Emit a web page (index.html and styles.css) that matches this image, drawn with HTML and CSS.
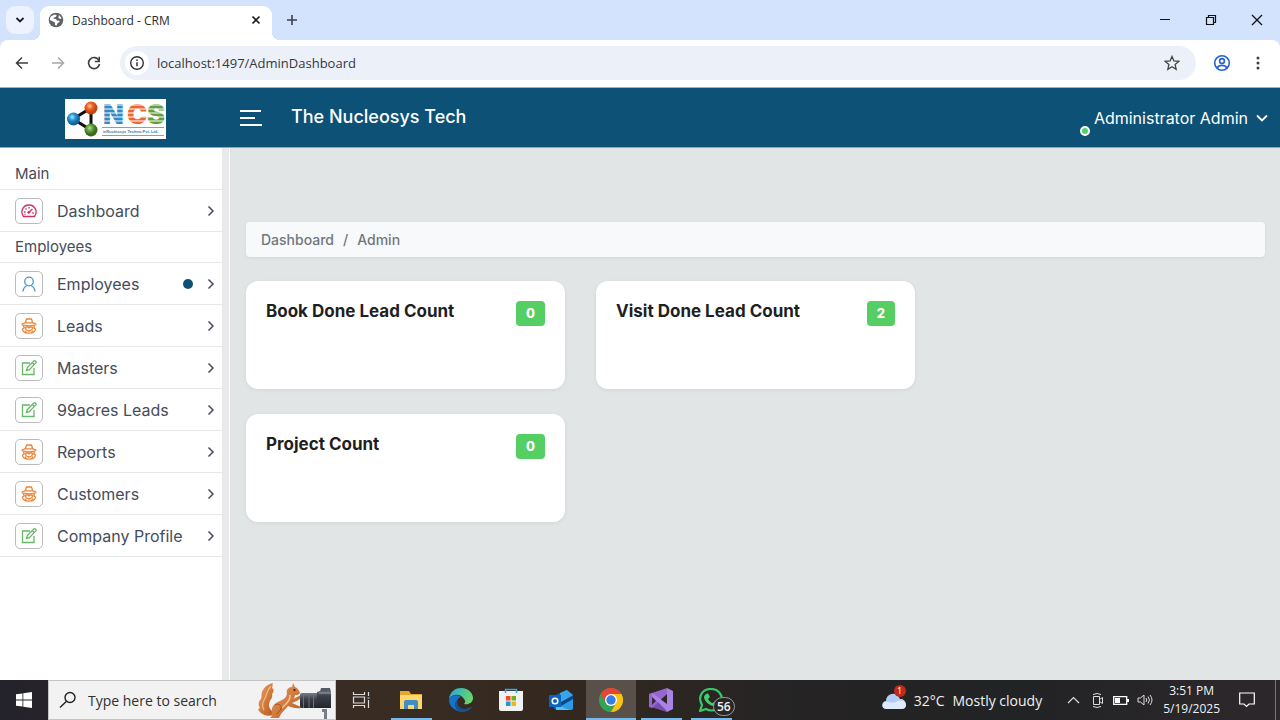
FILE: index.html
```html
<!DOCTYPE html>
<html lang="en">
<head>
<meta charset="utf-8">
<title>Dashboard - CRM</title>
<link rel="stylesheet" href="styles.css">
</head>
<body>
<svg class="defs" aria-hidden="true">
  <symbol id="chev" viewBox="0 0 8 12"><path d="M1.500 1.500 6 6l-4.500 4.500" fill="none" stroke="currentColor" stroke-width="1.500"/></symbol>
  <symbol id="edit" viewBox="0 0 16 16"><g fill="none" stroke="#66b866" stroke-width="1.300"><path d="M9 3H1.500v11.500H13V8"/><path d="M5.500 10.500 6.300 7.600 12.900 1c1-.9 2.900.8 2 1.900L8.300 9.600z"/><path d="M11.400 2.600l2 2"/></g></symbol>
  <symbol id="spy" viewBox="0 0 16 16"><g fill="none" stroke="#ee8434" stroke-width="1.300" stroke-linejoin="round"><path d="M4.300 5 5.500 1h5l1.200 4"/><path d="M4 4.800h8l3 1.200c0 1.200-3 1.800-7 1.800S1 7.200 1 6z"/><path d="M2.700 7.500c-.5 1 .2 1.800.8 2.200L1.500 11c.2 3 2 4.200 6.500 4.200s6.300-1.200 6.500-4.200l-2-1.300c.6-.4 1.300-1.200.8-2.200"/><path d="M4.500 9h2.700L8 10l.8-1h2.700M4.500 9.300c0 2 1.500 3.700 3.500 3.700s3.500-1.700 3.500-3.700M4 12.500l1.500 2.500M12 12.500 10.500 15"/></g></symbol>
</svg>

<div class="tabs">
  <button class="tab-search" aria-label="Search tabs"><svg width="10" height="8" viewBox="0 0 10 8"><path d="M1.500 2 5 5.500 8.500 2" fill="none" stroke="#1b1d22" stroke-width="1.800"/></svg></button>
  <div class="tab">
    <svg width="16" height="16" viewBox="0 0 16 16"><circle cx="8" cy="8" r="7.300" fill="#5f6368"/><path d="M3 4.200 6.800 2.500l2 .8-1.300 2H6.200l-.7 1.500 2.500.2 1 1.800 2-.2.700 1.200-2.200 1.400-.8 2.300-1.800-.4.200-2.300-2-1.400L1.800 8c0-1.500.4-2.800 1.200-3.800z" fill="#fff"/><path d="M11 3l2.600 3-1.300.9-1.900-1z" fill="#fff"/></svg>
    <span class="tab-title">Dashboard - CRM</span>
    <button class="icon" aria-label="Close tab"><svg width="10" height="10" viewBox="0 0 10 10"><path d="M1.500 1.500l7 7m0-7-7 7" stroke="#1b1d22" stroke-width="1.600"/></svg></button>
  </div>
  <button class="icon new-tab" aria-label="New tab"><svg width="12" height="12" viewBox="0 0 12 12"><path d="M6 1v10M1 6h10" stroke="#3c4043" stroke-width="1.600"/></svg></button>
  <div class="window-controls">
    <button class="icon" aria-label="Minimize"><svg width="12" height="12" viewBox="0 0 12 12"><path d="M1 5.500h10" stroke="#111"/></svg></button>
    <button class="icon" aria-label="Restore"><svg width="12" height="12" viewBox="0 0 12 12" fill="none" stroke="#111" stroke-width="1.200"><path d="M1.500 3.500h7v7h-7zM3.500 3.500v-2h7v7h-2"/></svg></button>
    <button class="icon" aria-label="Close"><svg width="12" height="12" viewBox="0 0 12 12"><path d="M1 1l10 10M11 1 1 11" stroke="#111" stroke-width="1.300"/></svg></button>
  </div>
</div>

<div class="toolbar-wrap">
<div class="toolbar">
  <button class="icon nav" aria-label="Back"><svg width="14" height="14" viewBox="0 0 14 14"><path d="M13 7H2M7 1.500 1.500 7 7 12.500" fill="none" stroke="#3c4043" stroke-width="1.500"/></svg></button>
  <button class="icon nav" aria-label="Forward"><svg width="14" height="14" viewBox="0 0 14 14"><path d="M1 7h11M7 1.500 12.500 7 7 12.500" fill="none" stroke="#a4a7ab" stroke-width="1.500"/></svg></button>
  <button class="icon nav" aria-label="Reload"><svg width="14" height="14" viewBox="0 0 14 14"><path d="M12 4.600A5.500 5.500 0 1 0 12.500 8" fill="none" stroke="#3c4043" stroke-width="1.600"/><path d="M13 .8v5.400H7.800V4.700h3.700V.8z" fill="#3c4043"/></svg></button>
  <div class="address">
    <button class="icon site-info" aria-label="Site information"><svg width="16" height="16" viewBox="0 0 16 16"><circle cx="8" cy="8" r="6.300" fill="none" stroke="#2f3236" stroke-width="1.400"/><path d="M8 7.300v4M8 4.500v1.600" stroke="#2f3236" stroke-width="1.500"/></svg></button>
    <input class="url" type="text" aria-label="Address" value="localhost:1497/AdminDashboard">
    <button class="icon" aria-label="Bookmark"><svg width="16" height="16" viewBox="0 0 16 16"><path d="M8 1.500 9.900 6l4.900.4-3.700 3.200 1.100 4.700L8 11.800l-4.200 2.500 1.100-4.700L1.200 6.400 6.100 6z" fill="none" stroke="#444" stroke-width="1.300"/></svg></button>
  </div>
  <button class="icon profile" aria-label="Profile"><svg width="18" height="18" viewBox="0 0 18 18" fill="none" stroke="#2563d0" stroke-width="1.600"><circle cx="9" cy="9" r="7.300"/><circle cx="9" cy="7" r="2.400"/><path d="M4 14c2-3.500 8-3.500 10 0"/></svg></button>
  <button class="icon more" aria-label="Menu"><svg width="4" height="14" viewBox="0 0 4 14" fill="#3c4043"><circle cx="2" cy="2" r="1.500"/><circle cx="2" cy="7" r="1.500"/><circle cx="2" cy="12" r="1.500"/></svg></button>
</div>
</div>

<header class="app-header">
  <div class="brand">
    <svg width="101" height="40" viewBox="0 0 101 40">
      <defs>
        <radialGradient id="gb" cx=".4" cy=".35"><stop offset="0" stop-color="#b5e4fa"/><stop offset=".5" stop-color="#2697d5"/><stop offset="1" stop-color="#12649f"/></radialGradient>
        <radialGradient id="go" cx=".4" cy=".35"><stop offset="0" stop-color="#ffc49c"/><stop offset=".5" stop-color="#ee6224"/><stop offset="1" stop-color="#c2440e"/></radialGradient>
        <radialGradient id="gg" cx=".4" cy=".35"><stop offset="0" stop-color="#c0dc97"/><stop offset=".5" stop-color="#609b37"/><stop offset="1" stop-color="#366a1d"/></radialGradient>
      </defs>
      <path d="M0 0h101v40H0z" fill="#fff"/>
      <path d="M8 20 26 9v22z" fill="none" stroke="#111" stroke-width="3"/>
      <circle cx="8.500" cy="20" r="6.500" fill="url(#gb)"/><circle cx="26" cy="9" r="6.500" fill="url(#go)"/><circle cx="26" cy="31" r="6.500" fill="url(#gg)"/>
      <g class="logo-letters"><text x="38" y="25" fill="#3189c5">N</text><text x="62" y="25" fill="#ee6535">C</text><text x="82" y="25" fill="#639d40">S</text></g>
      <path d="M37 6h62M37 10h62M37 14h62M37 18h62M37 22h62" stroke="#fff" stroke-width="1.200"/>
      <path d="M37 28.500h62M37 36.500h62" stroke="#4694bd" stroke-width=".8"/>
      <text class="logo-sub" x="38" y="34">ieNucleosys Techno Pvt. Ltd.</text>
    </svg>
  </div>
  <button class="icon burger" aria-label="Toggle menu"><svg width="22" height="16" viewBox="0 0 22 16"><path d="M0 1h21M0 8h15M0 15h22" stroke="#fff" stroke-width="2"/></svg></button>
  <h1>The Nucleosys Tech</h1>
  <button class="user"><span class="online"></span>Administrator Admin<svg width="12" height="8" viewBox="0 0 12 8"><path d="M1 1.500l5 5 5-5" fill="none" stroke="#fff" stroke-width="1.800"/></svg></button>
</header>

<div class="app">
  <nav class="sidebar">
    <h2 class="group">Main</h2>
    <a class="item" href="#"><span class="tile"><svg viewBox="0 0 16 16"><g fill="none" stroke="#d02f65" stroke-width="1.300"><path d="M2.500 13.500C-1.200 8.500 2 2 8 2s9.200 6.500 5.500 11.500z"/><path d="M8 4v1.500M4.500 5.500l1 1M3 9h1.500M12.800 10h-1.500M11.500 6 7.500 9.500M3.500 11.500l1-.5"/></g><circle cx="7.800" cy="9.300" r="1.400" fill="#d02f65"/></svg></span>Dashboard<svg class="chev"><use href="#chev"/></svg></a>
    <h2 class="group">Employees</h2>
    <a class="item" href="#"><span class="tile"><svg viewBox="0 0 16 16" fill="none" stroke="#4b99c9" stroke-width="1.300"><circle cx="8" cy="5.500" r="4.300"/><path d="M2 15.500c.2-3.500 2-5 4-6M14 15.500c-.2-3.500-2-5-4-6"/></svg></span>Employees<span class="dot"></span><svg class="chev"><use href="#chev"/></svg></a>
    <a class="item" href="#"><span class="tile"><svg><use href="#spy"/></svg></span>Leads<svg class="chev"><use href="#chev"/></svg></a>
    <a class="item" href="#"><span class="tile"><svg><use href="#edit"/></svg></span>Masters<svg class="chev"><use href="#chev"/></svg></a>
    <a class="item" href="#"><span class="tile"><svg><use href="#edit"/></svg></span>99acres Leads<svg class="chev"><use href="#chev"/></svg></a>
    <a class="item" href="#"><span class="tile"><svg><use href="#spy"/></svg></span>Reports<svg class="chev"><use href="#chev"/></svg></a>
    <a class="item" href="#"><span class="tile"><svg><use href="#spy"/></svg></span>Customers<svg class="chev"><use href="#chev"/></svg></a>
    <a class="item" href="#"><span class="tile"><svg><use href="#edit"/></svg></span>Company Profile<svg class="chev"><use href="#chev"/></svg></a>
  </nav>
  <main class="content">
    <nav class="crumbs" aria-label="Breadcrumb"><a href="#">Dashboard</a><span class="slash">/</span><span>Admin</span></nav>
    <div class="cards">
      <section class="card"><h2>Book Done Lead Count</h2><span class="badge">0</span></section>
      <section class="card"><h2>Visit Done Lead Count</h2><span class="badge">2</span></section>
      <section class="card new-row"><h2>Project Count</h2><span class="badge">0</span></section>
    </div>
  </main>
</div>

<footer class="taskbar">
  <button class="icon start" aria-label="Start"><svg width="16" height="16" viewBox="0 0 16 16" fill="#fff"><path d="M0 2.300 6.500 1.400v6.200H0zM7.300 1.300 16 0v7.600H7.300zM0 8.400h6.500v6.200L0 13.700zM7.300 8.400H16V16l-8.700-1.300z"/></svg></button>
  <div class="search">
    <svg width="18" height="18" viewBox="0 0 18 18"><circle cx="11" cy="6.500" r="5" fill="none" stroke="#222" stroke-width="1.400"/><path d="M7.500 10.200 1 16.500" stroke="#222" stroke-width="1.400"/></svg>
    <input type="text" aria-label="Search" placeholder="Type here to search">
    <svg class="art" width="76" height="38" viewBox="0 0 76 38">
      <defs><linearGradient id="fur" x2="1" y2="1"><stop stop-color="#eba062"/><stop offset="1" stop-color="#b95a20"/></linearGradient><linearGradient id="lens" x2="0" y2="1"><stop stop-color="#7a808a"/><stop offset=".4" stop-color="#3b4049"/><stop offset="1" stop-color="#23262c"/></linearGradient></defs>
      <path d="M16 34C9 36 3 33 1 28c2 0 2-1 1-3-1-3 0-5 2-7 1-2 0-4 1-7 2-5 6-8 11-9-1 2 0 3-1 5 2 1 2 4 0 6 1 3-1 5-2 7-2 4-1 8 3 11z" fill="url(#fur)"/>
      <path d="M7 29c-3-4-1-8 1-12 2-3 1-7 6-12" fill="none" stroke="#f3b984" stroke-width="1.300"/>
      <path d="M15 31c-1-6 3-9 8-11 4-2 6-3 7-7-1-4 1-7 5-7l1-4 2 4c3 1 4 4 5 6-1 2-3 2-5 2 0 2-1 3-2 4l8-4 1 2c-3 3-7 5-10 6l9 4v1c-5 1-10-1-13-2-2 3-5 5-7 8l-2 4h-9l2-2c-1-1 0-2 0-4z" fill="url(#fur)"/>
      <path d="M33 14c1 5-4 9-8 13" fill="none" stroke="#f4c493" stroke-width="1.500"/>
      <path d="M18 24c3-2 7 0 6 4-1 2-3 4-5 5" fill="none" stroke="#a9501b"/>
      <circle cx="37.500" cy="9" r="1" fill="#251510"/>
      <path d="M43 14q0-2 2-2h16v15H45q-2 0-2-2z" fill="url(#lens)"/><path d="M46.500 12v15M52 12v15M56.500 12v15" stroke="#6b717c"/>
      <path d="M60 11l3-1 1-3h9l1 4v16H60z" fill="url(#lens)"/><path d="M64 7h9v3h-9z" fill="#565c67"/><path d="M62 12h12" stroke="#989faa"/><path d="M65 28h5v10h-3V31h-2z" fill="#787e86"/>
    </svg>
  </div>
  <div class="apps">
    <button class="icon" aria-label="Task view"><svg width="18" height="16" viewBox="0 0 18 16" fill="none" stroke="#ddd" stroke-width="1.200"><path d="M1.500 0v2.500h11V0M1.500 5h11v6h-11zM1.500 16v-2.500h11V16M16.500 0v4M16.500 8v8M15.500 6h2"/></svg></button>
    <button class="icon running" aria-label="File Explorer"><svg width="22" height="20" viewBox="0 0 22 20"><path d="M0 1h9l2 3h11v15H0z" fill="#e5a629"/><path d="M0 5h22v14H0z" fill="#fdd76b"/><path d="M4 19v-7q0-2 2-2h10q2 0 2 2v7h-4v-4H8v4z" fill="#3f8dc5"/></svg></button>
    <button class="icon" aria-label="Edge"><svg width="24" height="24" viewBox="0 0 24 24"><defs><linearGradient id="e" x2="1" y2=".3"><stop stop-color="#27a6dd"/><stop offset="1" stop-color="#65d56b"/></linearGradient></defs><path d="M0 11C1 3 7 0 12 0c8 0 12 6 12 10 0 5-5 7-9 6 2-2 1-4 0-5C12 6 4 5 0 11z" fill="url(#e)"/><path d="M0 12C1 7 9 6 12 9c-5 1-5 8-1 11 3 2 8 1 12-1-6 7-14 5-18 2-4-3-5-6-5-9z" fill="#1574c7"/><path d="M9 11c-3 4 0 10 7 10 3 0 5-1 7-2-2 3-6 5-10 5-8-1-9-10-4-13z" fill="#174f91"/></svg></button>
    <button class="icon" aria-label="Store"><svg width="24" height="24" viewBox="0 0 24 24"><path d="M6.500 5V1.500h11V5" fill="none" stroke="#32a8df" stroke-width="1.500"/><path d="M0 3h24v18q0 2-2 2H2q-2 0-2-2z" fill="#f1f1f1"/><path d="M6.500 5V3M17.500 5V3" stroke="#32a8df" stroke-width="1.500"/><path d="M7 8h4.500v4.500H7z" fill="#ed4b26"/><path d="M12.500 8H17v4.500h-4.500z" fill="#74ad21"/><path d="M7 13.500h4.500V18H7z" fill="#159bd7"/><path d="M12.500 13.500H17V18h-4.500z" fill="#f5b51a"/></svg></button>
    <button class="icon" aria-label="Outlook"><svg width="24" height="22" viewBox="0 0 24 22"><path d="M5 7 17 1l7 5v14H5z" fill="#1164b4"/><path d="m11 4 7-3 6 5-13 8z" fill="#38a5e7"/><path d="M12 13 24 7v4l-11 6z" fill="#0b4487"/><path d="m7 20 17-10v9q0 2-2 2H7z" fill="#2e9be4"/><path d="m7 16 14 5H7z" fill="#56c3f3"/><path d="M0 6h12v12H0z" fill="#0b65b9"/><circle cx="6" cy="12" r="2.800" fill="none" stroke="#fff" stroke-width="1.500"/></svg></button>
    <button class="icon running active" aria-label="Chrome"><svg width="24" height="24" viewBox="0 0 24 24"><circle cx="12" cy="12" r="12" fill="#31a553"/><path d="M1.600 6A12 12 0 0 1 22.400 6L12 12z" fill="#e94335"/><path d="M1.600 6 7 15l5-9z" fill="#e94335"/><path d="M22.400 6H12l5 9-5 9A12 12 0 0 0 22.400 6z" fill="#fbc116"/><circle cx="12" cy="12" r="6" fill="#fff"/><circle cx="12" cy="12" r="4.700" fill="#367de8"/></svg></button>
    <button class="icon running" aria-label="Visual Studio"><svg width="24" height="24" viewBox="0 0 24 24"><path d="m0 6 3-1 15 14V24L2 19z" fill="#7750ad"/><path d="M0 6v13l3 1L18 6V0z" fill="#9866d3"/><path d="m3 8 14 14 1 2 6-3V3l-6-3v16L3 5z" fill="#a984e5"/><path d="m3 9 4 4-4 4z" fill="#38293e"/></svg></button>
    <button class="icon running" aria-label="WhatsApp, 56 unread"><svg width="24" height="24" viewBox="0 0 24 24"><path d="m1 23 2-6C-2 8 4 1 12 1c7 0 11 5 11 11 0 8-9 13-16 9z" fill="none" stroke="#36c768" stroke-width="2.200"/><path d="M7 6c3-2 3 2 4 3l-2 2c1 2 3 4 5 4l2-2 3 2c0 3-3 4-5 3-5-1-9-6-9-9 0-1 1-2 2-3z" fill="#42cf70"/></svg><span class="count">56</span></button>
  </div>
  <div class="tray">
    <div class="weather"><span class="cloud"><svg width="24" height="18" viewBox="0 0 24 18"><path d="M5 18c-6 0-6-8-1-8C4 3 14-1 18 8c7-1 8 10 1 10z" fill="#b2cdf5"/><path d="M5 18c-6 0-6-6-1-7 4-1 6 2 10 0 5-3 10-1 10 3 0 3-2 4-5 4z" fill="#dfeaff"/></svg><span class="alert">1</span></span><span>32°C</span><span>Mostly cloudy</span></div>
    <div class="status">
      <svg class="expand" width="13" height="8" viewBox="0 0 13 8"><path d="m1 7 5.500-5.500L12 7" fill="none" stroke="#ddd" stroke-width="1.200"/></svg>
      <svg width="14" height="16" viewBox="0 0 14 16" fill="none" stroke="#ddd"><path d="M2.500 4.500h6v8h-6zM8.500 7.500l3-2v6l-3-2M2 2.500q4-2 8 0M2 14.500q4 2 8 0"/></svg>
      <svg width="16" height="9" viewBox="0 0 16 9"><path d="M.7.700h13v7.600H.7z" fill="none" stroke="#fff" stroke-width="1.300"/><path d="M2 2h5v5H2zM14 3h2v3h-2z" fill="#fff"/></svg>
      <svg width="16" height="14" viewBox="0 0 16 14" fill="none" stroke="#ddd"><path d="M1 5h2.500L7 2v10L3.500 9H1zM9 5q1.500 2 0 4M11 3.500q3 3.500 0 7M13 2q4 5 0 10"/></svg>
    </div>
    <div class="clock"><span>3:51 PM</span><span>5/19/2025</span></div>
    <button class="icon" aria-label="Notifications"><svg width="16" height="16" viewBox="0 0 16 16"><path d="M.7 1h14.600v11H10l-2.500 2.500L5 12H.7z" fill="none" stroke="#fff" stroke-width="1.200"/></svg></button>
    <span class="peek"></span>
  </div>
</footer>
</body>
</html>
```
FILE: styles.css
```css
* { box-sizing: border-box; }
body {
  margin: 0;
  min-height: 100vh;
  display: flex;
  flex-direction: column;
  font-family: Inter, "Liberation Sans", sans-serif;
  background: #e1e5e6;
}
svg { display: block; flex: none; }
.defs { position: absolute; width: 0; height: 0; }
button { border: 0; padding: 0; background: none; font: inherit; color: inherit; }
input { border: 0; padding: 0; background: none; outline: 0; min-width: 0; font: inherit; color: inherit; }
a { color: inherit; text-decoration: none; }
.icon { display: flex; align-items: center; justify-content: center; flex: none; }

/* browser tabs */
.tabs { display: flex; height: 40px; background: #d3e2fd; font-family: "Open Sans", sans-serif; }
.tab-search {
  display: flex; align-items: center; justify-content: center;
  width: 28px; height: 28px; margin: 6px 6px 0; border-radius: 9px; background: #edf2ff;
}
.tab {
  position: relative; display: flex; align-items: center; gap: 8px;
  width: 232px; height: 34px; margin-top: 6px; padding: 0 11px 6px 8px;
  border-radius: 9px 9px 0 0; background: #fff;
}
.tab::before, .tab::after {
  content: ""; position: absolute; bottom: 0; width: 8px; height: 8px;
}
.tab::before { right: 100%; background: radial-gradient(circle at 0 0, transparent 8px, #fff 8px); }
.tab::after { left: 100%; background: radial-gradient(circle at 100% 0, transparent 8px, #fff 8px); }
.tab-title { flex: 1; font-size: 12px; color: #2b2d31; }
.new-tab { width: 40px; }
.window-controls { display: flex; gap: 34px; margin-left: auto; padding-right: 17px; }

/* browser toolbar */
.toolbar-wrap { background: #d3e2fd; }
.toolbar {
  display: flex; align-items: center; height: 47px; padding: 0 12px 1px 4px;
  background: #fff; border-radius: 8px 8px 0 0; font-family: "Open Sans", sans-serif;
}
.nav { width: 36px; height: 36px; }
.address {
  display: flex; align-items: center; flex: 1; height: 34px; margin-left: 8px;
  padding: 0 16px 0 5px; border-radius: 17px; background: #ecf0f9;
}
.site-info { width: 24px; height: 24px; border-radius: 50%; background: #fff; }
.url { flex: 1; margin-left: 8px; font-size: 13px; color: #35383c; }
.profile { width: 36px; margin-left: 8px; }
.more { width: 20px; margin-left: 8px; }

/* application header */
.app-header {
  display: flex; align-items: center; height: 61px; padding-right: 12px;
  background: #0d5177; color: #fff; border-top: 1px solid #9eb3c0; border-bottom: 1px solid #8fa9b7;
}
.brand { display: flex; justify-content: center; width: 231px; flex: none; padding-top: 2px; }
.logo-letters { font: 900 27px Inter, sans-serif; }
.logo-sub { font: 700 4px "Liberation Sans", sans-serif; fill: #327fa7; }
.burger { margin-left: 9px; }
.app-header h1 { margin: 0 auto 2px 29px; font-size: 18px; font-weight: 500; }
.user { position: relative; display: flex; align-items: center; gap: 8px; font-size: 16px; }
.online {
  position: absolute; left: -14px; bottom: -8px; width: 10px; height: 10px;
  border: 2px solid #fff; border-radius: 50%; background: #55ce63;
}

/* application body */
.app { display: flex; flex: 1; }
.sidebar {
  width: 230px; flex: none; padding-top: 11px; color: #454c5b;
  background: linear-gradient(#e9e9e9, #e9e9e9) right / 7px 100% no-repeat #fff;
  border-right: 1px solid #fff;
}
.group {
  display: flex; align-items: center; height: 31px; margin: 0; padding: 0 0 2px 15px;
  font-size: 15px; font-weight: 400; border-bottom: 1px solid #e5e7e8;
}
.item {
  display: flex; align-items: center; height: 42px; padding: 0 14px 0 15px;
  font-size: 16px; border-bottom: 1px solid #e5e7e8;
}
.tile {
  display: flex; align-items: center; justify-content: center; width: 28px; height: 26px;
  margin-right: 14px; border: 1px solid #bbb; border-radius: 5px;
}
.tile svg { width: 16px; height: 16px; }
.chev { width: 8px; height: 12px; margin-left: auto; }
.dot { width: 10px; height: 10px; margin-left: auto; border-radius: 50%; background: #0d5177; }
.dot + .chev { margin-left: 14px; }
.content { flex: 1; padding: 74px 15px 24px 16px; }
.crumbs {
  display: flex; align-items: center; height: 35px; padding: 0 15px 1px;
  font-size: 14px; font-weight: 500; color: #70777e; background: #f8f9fb;
  border-radius: 4px; box-shadow: 0 1px 3px #0001;
}
.slash { margin: 0 9px; }
.cards { display: grid; grid-template-columns: repeat(3, 1fr); gap: 25px 31px; margin-top: 24px; }
.card {
  display: flex; justify-content: space-between; align-items: flex-start;
  min-height: 108px; padding: 20px; border-radius: 12px; background: #fff;
  box-shadow: 0 1px 4px #0001;
}
.new-row { grid-column-start: 1; }
.card h2 { margin: 0; font-size: 17px; line-height: 20px; font-weight: 700; color: #1f1f1f; }
.badge {
  padding: 0 10px; border-radius: 4px; background: #55ce63; color: #fff;
  font-size: 13px; line-height: 25px; font-weight: 800;
}

/* desktop taskbar */
.taskbar {
  display: flex; height: 40px; color: #f1f1f1; font-family: "Open Sans", sans-serif;
  background: linear-gradient(90deg, #24222b, #392c23 28%, #33281f 45%, #262424 60%, #222325 80%, #2d282b);
}
.start { width: 48px; }
.search {
  display: flex; align-items: center; width: 288px; padding: 0 2px 0 10px;
  color: #303030; background: #f2f2f2; border: 1px solid #c4c4c4;
}
.search input { flex: 1; margin-left: 11px; font-size: 14px; }
.search input::placeholder { color: #303030; opacity: 1; }
.apps { display: flex; }
.apps .icon { position: relative; width: 50px; }
.running::after {
  content: ""; position: absolute; bottom: 0; left: 5px; right: 4px; height: 2px; background: #76b9ed;
}
.active { background: #5a504a; }
.active::after { left: 0; right: 0; }
.count {
  position: absolute; left: 27px; top: 17px; padding: 0 3px; border: 1px solid #999;
  border-radius: 10px; background: #292725; font-size: 12px; line-height: 17px; font-weight: 600;
}
.tray { display: flex; align-items: center; margin-left: auto; }
.weather { display: flex; align-items: center; gap: 8px; margin-right: 25px; font-size: 14px; }
.cloud { position: relative; }
.alert {
  position: absolute; top: -6px; right: 0; width: 12px; border-radius: 50%;
  background: #c4291c; color: #fff; font-size: 9px; line-height: 12px; text-align: center;
}
.status { display: flex; align-items: center; gap: 8px; margin-right: 10px; }
.expand { margin-right: 3px; }
.clock { display: grid; justify-items: center; margin-right: 19px; font-size: 12px; line-height: 18px; }
.peek { align-self: stretch; width: 1px; margin: 0 4px 0 20px; background: #777; }
```
